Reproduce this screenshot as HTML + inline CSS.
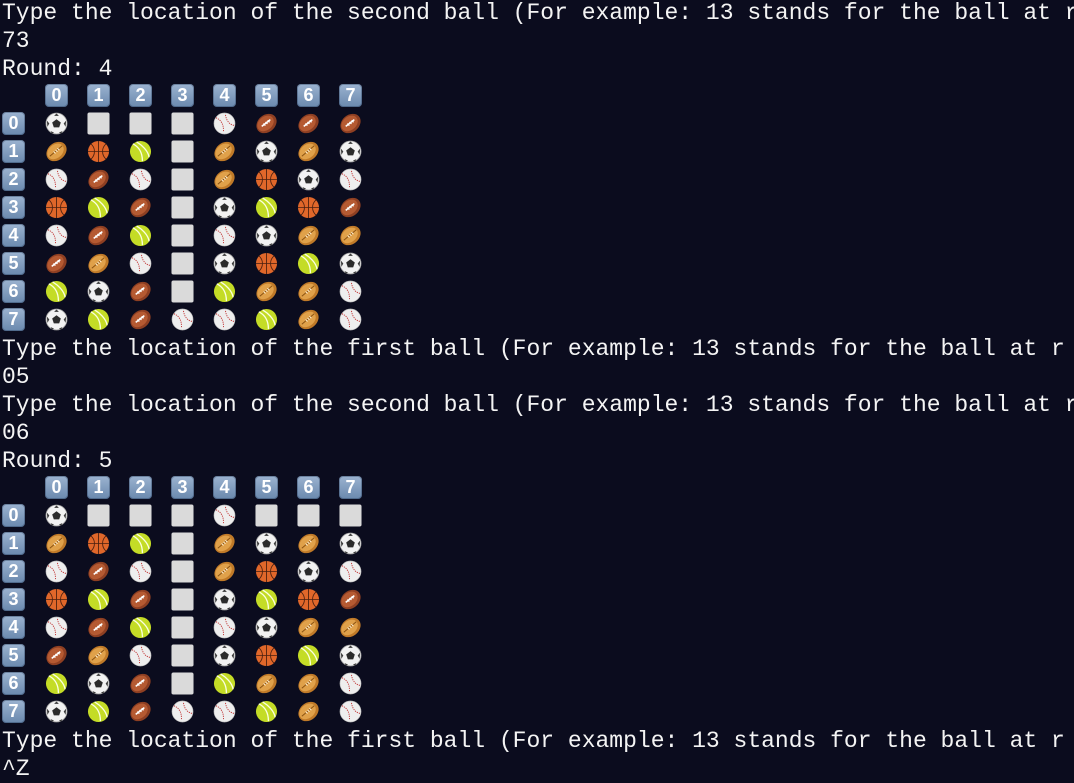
<!DOCTYPE html>
<html><head><meta charset="utf-8"><style>
html,body{margin:0;padding:0;background:#0b0c1e;width:1074px;height:782px;overflow:hidden}
.l{position:absolute;left:2px;height:28px;line-height:28px;font-family:"Liberation Mono",monospace;font-size:23px;color:#f4f4f4;white-space:pre;margin-top:1px}
.g{position:absolute;left:0;height:28px;display:flex;align-items:center}
.g>*{flex:none}
.k{width:23px;height:23px;border-radius:4px;background:linear-gradient(#9bb3d0,#6b89ae);color:#fff;font:bold 18px/23px "Liberation Sans",sans-serif;text-align:center;box-shadow:inset 0 0 0 1px rgba(40,60,90,.4)}
.r0{margin-left:2px;margin-right:20px}
.c{margin-right:19px;width:23px;height:23px}
.sp{width:45px}
svg.c{display:block}
</style></head><body>
<svg width="0" height="0" style="position:absolute">
<defs>
<symbol id="S" viewBox="0 0 24 24"><circle cx="12" cy="12" r="11" fill="#f2f2f2" stroke="#9a9a9a" stroke-width=".8"/><polygon points="12,7.5 16.5,11 14.8,16 9.2,16 7.5,11" fill="#2b2b2b"/><path d="M12 1.5 L9.5 4 14.5 4Z M2 9 L4.5 12 2.5 15.5Z M22 9 L19.5 12 21.5 15.5Z M6 20 L9.5 21.5 7 22.5Z M18 20 L14.5 21.5 17 22.5Z" fill="#3a3a3a"/></symbol>
<symbol id="F" viewBox="0 0 24 24"><ellipse cx="12" cy="12" rx="11.5" ry="9" transform="rotate(-40 12 12)" fill="#8e3f22"/><ellipse cx="11.3" cy="11.3" rx="9.5" ry="7" transform="rotate(-40 12 12)" fill="#b55a32"/><path d="M7 15 L16 8" stroke="#fff" stroke-width="1.6"/><path d="M8.8 12l2 2.2M11 10.3l2 2.2M13.2 8.6l2 2.2" stroke="#fff" stroke-width="1.3"/></symbol>
<symbol id="R" viewBox="0 0 24 24"><ellipse cx="12" cy="12" rx="11.5" ry="9" transform="rotate(-40 12 12)" fill="#c07a28"/><ellipse cx="11.3" cy="11.3" rx="9.5" ry="7" transform="rotate(-40 12 12)" fill="#e0a14a"/><path d="M5 17 L18 6" stroke="#8a5212" stroke-width="1"/><path d="M9 12l2 2M11 10.3l2 2M13 8.6l2 2" stroke="#fff2d8" stroke-width="1"/></symbol>
<symbol id="K" viewBox="0 0 24 24"><circle cx="12" cy="12" r="11" fill="#e0672a"/><path d="M12 1v22M1 12h22M4 4c5 4 5 12 0 16M20 4c-5 4-5 12 0 16" stroke="#4a2010" stroke-width=".9" fill="none"/></symbol>
<symbol id="T" viewBox="0 0 24 24"><circle cx="12" cy="12" r="11" fill="#c4dc26"/><path d="M4 4c6 3 10 9 10 18M8 2c5 3 12 9 13 16" stroke="#fbffe0" stroke-width="1.4" fill="none"/></symbol>
<symbol id="B" viewBox="0 0 24 24"><circle cx="12" cy="12" r="11" fill="#eeeeee" stroke="#bbb" stroke-width=".6"/><path d="M3 6c5 2 8 6 8 14M13 3c1 6 4 10 9 11" stroke="#c23a3a" stroke-width="1" stroke-dasharray="1.3 1" fill="none"/></symbol>
<symbol id="E" viewBox="0 0 24 24"><rect x="0.5" y="0.5" width="23" height="23" rx="2" fill="#dadada"/></symbol>
</defs></svg>

<div class="l" style="top:-2px">Type the location of the second ball (For example: 13 stands for the ball at r</div>
<div class="l" style="top:26px">73</div>
<div class="l" style="top:54px">Round: 4</div>
<div class="g" style="top:81px"><span class="sp"></span><span class="k c">0</span><span class="k c">1</span><span class="k c">2</span><span class="k c">3</span><span class="k c">4</span><span class="k c">5</span><span class="k c">6</span><span class="k c">7</span></div>
<div class="g" style="top:109px"><span class="k r0">0</span><svg class="c"><use href="#S"/></svg><svg class="c"><use href="#E"/></svg><svg class="c"><use href="#E"/></svg><svg class="c"><use href="#E"/></svg><svg class="c"><use href="#B"/></svg><svg class="c"><use href="#F"/></svg><svg class="c"><use href="#F"/></svg><svg class="c"><use href="#F"/></svg></div>
<div class="g" style="top:137px"><span class="k r0">1</span><svg class="c"><use href="#R"/></svg><svg class="c"><use href="#K"/></svg><svg class="c"><use href="#T"/></svg><svg class="c"><use href="#E"/></svg><svg class="c"><use href="#R"/></svg><svg class="c"><use href="#S"/></svg><svg class="c"><use href="#R"/></svg><svg class="c"><use href="#S"/></svg></div>
<div class="g" style="top:165px"><span class="k r0">2</span><svg class="c"><use href="#B"/></svg><svg class="c"><use href="#F"/></svg><svg class="c"><use href="#B"/></svg><svg class="c"><use href="#E"/></svg><svg class="c"><use href="#R"/></svg><svg class="c"><use href="#K"/></svg><svg class="c"><use href="#S"/></svg><svg class="c"><use href="#B"/></svg></div>
<div class="g" style="top:193px"><span class="k r0">3</span><svg class="c"><use href="#K"/></svg><svg class="c"><use href="#T"/></svg><svg class="c"><use href="#F"/></svg><svg class="c"><use href="#E"/></svg><svg class="c"><use href="#S"/></svg><svg class="c"><use href="#T"/></svg><svg class="c"><use href="#K"/></svg><svg class="c"><use href="#F"/></svg></div>
<div class="g" style="top:221px"><span class="k r0">4</span><svg class="c"><use href="#B"/></svg><svg class="c"><use href="#F"/></svg><svg class="c"><use href="#T"/></svg><svg class="c"><use href="#E"/></svg><svg class="c"><use href="#B"/></svg><svg class="c"><use href="#S"/></svg><svg class="c"><use href="#R"/></svg><svg class="c"><use href="#R"/></svg></div>
<div class="g" style="top:249px"><span class="k r0">5</span><svg class="c"><use href="#F"/></svg><svg class="c"><use href="#R"/></svg><svg class="c"><use href="#B"/></svg><svg class="c"><use href="#E"/></svg><svg class="c"><use href="#S"/></svg><svg class="c"><use href="#K"/></svg><svg class="c"><use href="#T"/></svg><svg class="c"><use href="#S"/></svg></div>
<div class="g" style="top:277px"><span class="k r0">6</span><svg class="c"><use href="#T"/></svg><svg class="c"><use href="#S"/></svg><svg class="c"><use href="#F"/></svg><svg class="c"><use href="#E"/></svg><svg class="c"><use href="#T"/></svg><svg class="c"><use href="#R"/></svg><svg class="c"><use href="#R"/></svg><svg class="c"><use href="#B"/></svg></div>
<div class="g" style="top:305px"><span class="k r0">7</span><svg class="c"><use href="#S"/></svg><svg class="c"><use href="#T"/></svg><svg class="c"><use href="#F"/></svg><svg class="c"><use href="#B"/></svg><svg class="c"><use href="#B"/></svg><svg class="c"><use href="#T"/></svg><svg class="c"><use href="#R"/></svg><svg class="c"><use href="#B"/></svg></div>
<div class="l" style="top:334px">Type the location of the first ball (For example: 13 stands for the ball at r</div>
<div class="l" style="top:362px">05</div>
<div class="l" style="top:390px">Type the location of the second ball (For example: 13 stands for the ball at r</div>
<div class="l" style="top:418px">06</div>
<div class="l" style="top:446px">Round: 5</div>
<div class="g" style="top:473px"><span class="sp"></span><span class="k c">0</span><span class="k c">1</span><span class="k c">2</span><span class="k c">3</span><span class="k c">4</span><span class="k c">5</span><span class="k c">6</span><span class="k c">7</span></div>
<div class="g" style="top:501px"><span class="k r0">0</span><svg class="c"><use href="#S"/></svg><svg class="c"><use href="#E"/></svg><svg class="c"><use href="#E"/></svg><svg class="c"><use href="#E"/></svg><svg class="c"><use href="#B"/></svg><svg class="c"><use href="#E"/></svg><svg class="c"><use href="#E"/></svg><svg class="c"><use href="#E"/></svg></div>
<div class="g" style="top:529px"><span class="k r0">1</span><svg class="c"><use href="#R"/></svg><svg class="c"><use href="#K"/></svg><svg class="c"><use href="#T"/></svg><svg class="c"><use href="#E"/></svg><svg class="c"><use href="#R"/></svg><svg class="c"><use href="#S"/></svg><svg class="c"><use href="#R"/></svg><svg class="c"><use href="#S"/></svg></div>
<div class="g" style="top:557px"><span class="k r0">2</span><svg class="c"><use href="#B"/></svg><svg class="c"><use href="#F"/></svg><svg class="c"><use href="#B"/></svg><svg class="c"><use href="#E"/></svg><svg class="c"><use href="#R"/></svg><svg class="c"><use href="#K"/></svg><svg class="c"><use href="#S"/></svg><svg class="c"><use href="#B"/></svg></div>
<div class="g" style="top:585px"><span class="k r0">3</span><svg class="c"><use href="#K"/></svg><svg class="c"><use href="#T"/></svg><svg class="c"><use href="#F"/></svg><svg class="c"><use href="#E"/></svg><svg class="c"><use href="#S"/></svg><svg class="c"><use href="#T"/></svg><svg class="c"><use href="#K"/></svg><svg class="c"><use href="#F"/></svg></div>
<div class="g" style="top:613px"><span class="k r0">4</span><svg class="c"><use href="#B"/></svg><svg class="c"><use href="#F"/></svg><svg class="c"><use href="#T"/></svg><svg class="c"><use href="#E"/></svg><svg class="c"><use href="#B"/></svg><svg class="c"><use href="#S"/></svg><svg class="c"><use href="#R"/></svg><svg class="c"><use href="#R"/></svg></div>
<div class="g" style="top:641px"><span class="k r0">5</span><svg class="c"><use href="#F"/></svg><svg class="c"><use href="#R"/></svg><svg class="c"><use href="#B"/></svg><svg class="c"><use href="#E"/></svg><svg class="c"><use href="#S"/></svg><svg class="c"><use href="#K"/></svg><svg class="c"><use href="#T"/></svg><svg class="c"><use href="#S"/></svg></div>
<div class="g" style="top:669px"><span class="k r0">6</span><svg class="c"><use href="#T"/></svg><svg class="c"><use href="#S"/></svg><svg class="c"><use href="#F"/></svg><svg class="c"><use href="#E"/></svg><svg class="c"><use href="#T"/></svg><svg class="c"><use href="#R"/></svg><svg class="c"><use href="#R"/></svg><svg class="c"><use href="#B"/></svg></div>
<div class="g" style="top:697px"><span class="k r0">7</span><svg class="c"><use href="#S"/></svg><svg class="c"><use href="#T"/></svg><svg class="c"><use href="#F"/></svg><svg class="c"><use href="#B"/></svg><svg class="c"><use href="#B"/></svg><svg class="c"><use href="#T"/></svg><svg class="c"><use href="#R"/></svg><svg class="c"><use href="#B"/></svg></div>
<div class="l" style="top:726px">Type the location of the first ball (For example: 13 stands for the ball at r</div>
<div class="l" style="top:754px">^Z</div>
</body></html>
